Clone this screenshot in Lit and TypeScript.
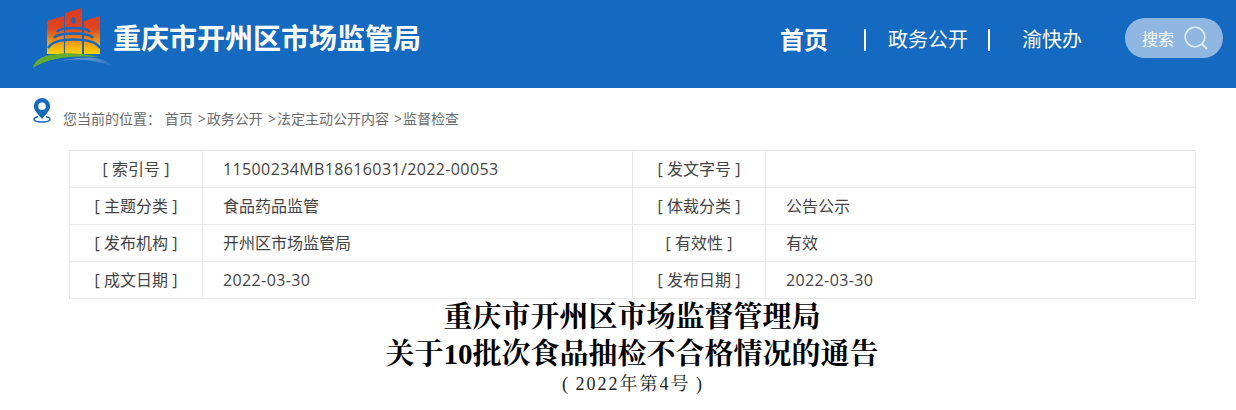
import { LitElement, html, css, svg } from "lit";
import { customElement } from "lit/decorators.js";

const rows = [
  ["[ 索引号 ]", "11500234MB18616031/2022-00053", "[ 发文字号 ]", ""],
  ["[ 主题分类 ]", "食品药品监管", "[ 体裁分类 ]", "公告公示"],
  ["[ 发布机构 ]", "开州区市场监管局", "[ 有效性 ]", "有效"],
  ["[ 成文日期 ]", "2022-03-30", "[ 发布日期 ]", "2022-03-30"],
];

const logo = svg`<svg class="logo" viewBox="0 0 82 62" width="82" height="62">
  <defs>
    <linearGradient id="g" gradientUnits="userSpaceOnUse" x1="0" y1="1" x2="0" y2="47">
      <stop offset="0" stop-color="#dc3a20"/><stop offset=".45" stop-color="#e3451c"/>
      <stop offset=".72" stop-color="#f29310"/><stop offset="1" stop-color="#fed500"/>
    </linearGradient>
    <linearGradient id="sw" x1="0" y1="0" x2="1" y2="0">
      <stop offset="0" stop-color="#1469c1"/><stop offset=".4" stop-color="#6a9bd2"/><stop offset=".75" stop-color="#4f88c8"/><stop offset="1" stop-color="#1a6bc0"/>
    </linearGradient>
  </defs>
  <path fill="url(#g)" d="M14 14 L31 9 V47 H14Z M32 6 L49 1 V47 H32Z M51 14 L67 9 V47 H51Z"/>
  <ellipse cx="40.500" cy="13.500" rx="2.400" ry="3.200" fill="#1469c1"/>
  <path fill="none" stroke="#1469c1" stroke-width="2.500" d="M24 25 Q26 21 40.500 21 Q55 21 57 25 M21 31 Q24 26.500 40.500 26.500 Q57 26.500 60 31 M15 41 Q20 32.500 40.500 32.500 Q62 32.500 67 41"/>
  <path fill="none" stroke="#1469c1" stroke-width="1.200" d="M31.500 30 V47 M50 30 V47"/>
  <path fill="#63ad2f" d="M0 61 C2 51 12 48 28 46.500 Q46 45.500 66 50 C42 48.500 16 50 0 61Z"/>
  <path fill="url(#sw)" d="M15 58 Q46 46 81 60 Q74 52 58 50.500 Q34 50 15 58Z"/>
</svg>`;

const pin = svg`<svg viewBox="0 0 18 25" width="18" height="25">
  <path fill="#1469c1" fill-rule="evenodd" d="M9 0a8.200 8.200 0 0 0-8.200 8.200C.8 12.700 6 17 9 21c3-4 8.200-8.300 8.200-12.800A8.200 8.200 0 0 0 9 0Zm0 4.400a3.800 3.800 0 1 1 0 7.600 3.800 3.800 0 0 1 0-7.600Z"/>
  <path fill="none" stroke="#1469c1" stroke-width="1.500" d="M5 18.500C2.500 19.200 1 20.200 1 21.300 1 23 4.500 24 9 24s8-1 8-2.700c0-1.100-1.500-2.100-4-2.800"/>
</svg>`;

const search = svg`<svg viewBox="0 0 24 24" width="24" height="24">
  <circle cx="11" cy="11" r="9.800" fill="none" stroke="#e4edf7" stroke-width="1.600"/>
  <path d="M18 18l5 5" stroke="#e4edf7" stroke-width="1.800" fill="none"/>
</svg>`;

const isNum = (s: string) => /^[0-9]/.test(s);

@customElement("app-root")
export class AppRoot extends LitElement {
  static styles = css`
    :host {
      display: block;
      height: 410px;
      overflow: hidden;
      background: #fff;
      font-family: "Noto Sans CJK SC", sans-serif;
    }
    .header {
      height: 88px;
      background: #1469c1;
      display: flex;
      align-items: flex-start;
      color: #fff;
    }
    .brand { display: flex; align-items: flex-start; margin-left: 33px; }
    .logo { margin-top: 7px; flex: none; }
    .site {
      margin: 14px 0 0 -2px;
      font-size: 28px;
      line-height: 46px;
      font-weight: 700;
      white-space: nowrap;
    }
    .nav { margin-left: auto; display: flex; align-items: flex-start; margin-right: 13px; }
    .home { font-size: 24px; font-weight: 700; line-height: 36px; margin-top: 21px; }
    .sep { width: 2px; height: 22px; background: #fff; margin-top: 29px; }
    .sep.a { margin-left: 36px; }
    .sep.b { margin-left: 20px; }
    .item { font-size: 20px; line-height: 30px; margin-top: 24px; white-space: nowrap; }
    .item.a { margin-left: 22px; }
    .item.b { margin-left: 32px; width: 60px; overflow: hidden; }
    .search {
      margin: 18px 0 0 43px;
      width: 98px;
      height: 40px;
      border-radius: 20px;
      background: #8fb7e2;
      display: flex;
      align-items: center;
      box-sizing: border-box;
      padding-left: 17px;
      gap: 10px;
      font-size: 16px;
    }
    .crumb {
      display: flex;
      align-items: flex-start;
      height: 62px;
      padding-left: 33px;
      color: #6b6b6b;
      font-family: "Open Sans", "Noto Sans CJK SC", sans-serif;
      font-size: 14px;
      white-space: pre;
    }
    .crumb svg { margin-top: 10px; flex: none; }
    .crumb > span { margin: 21px 0 0 12px; line-height: 20px; }
    .gt { margin: 0 1px 0 1.5px; }
    table {
      margin-left: 69px;
      width: 1127px;
      border-collapse: collapse;
      table-layout: fixed;
      color: #444;
      font-family: "Open Sans", "Noto Sans CJK SC", sans-serif;
      font-size: 16px;
    }
    td {
      height: 36px;
      padding: 0;
      border: 1px solid #e8e8e8;
      line-height: 36px;
    }
    td.k { text-align: center; width: 132px; }
    td.v { padding-left: 20px; }
    td.v1 { width: 409px; }
    td.num { letter-spacing: 0.38px; }
    .doc {
      text-align: center;
      color: #000;
      font-family: "Liberation Serif", "Noto Serif CJK SC", "Noto Sans CJK SC", serif;
      padding-left: 28px;
    }
    .doc h1 { margin: 0; font-size: 29px; line-height: 37px; font-weight: 700; }
    .doc p {
      margin: -1px 0 0;
      padding-left: 2px;
      font-size: 18px;
      line-height: 25px;
      letter-spacing: 2px;
      word-spacing: -1px;
      color: #222;
      white-space: pre;
    }
  `;

  render() {
    return html`
      <div class="header">
        <div class="brand">${logo}<div class="site">重庆市开州区市场监管局</div></div>
        <div class="nav">
          <div class="home">首页</div>
          <div class="sep a"></div>
          <div class="item a">政务公开</div>
          <div class="sep b"></div>
          <div class="item b">渝快办</div>
          <div class="search">搜索 ${search}</div>
        </div>
      </div>
      <div class="crumb">${pin}<span>您当前的位置： 首页 <span class="gt">&gt;</span>政务公开 <span class="gt">&gt;</span>法定主动公开内容 <span class="gt">&gt;</span>监督检查</span></div>
      <table>
        ${rows.map(
          (r) => html`<tr>
            <td class="k">${r[0]}</td>
            <td class="v v1 ${isNum(r[1]) ? "num" : ""}">${r[1]}</td>
            <td class="k">${r[2]}</td>
            <td class="v ${isNum(r[3]) ? "num" : ""}">${r[3]}</td>
          </tr>`
        )}
      </table>
      <div class="doc">
        <h1>重庆市开州区市场监督管理局<br />关于10批次食品抽检不合格情况的通告</h1>
        <p>( 2022年第4号 )</p>
      </div>
    `;
  }
}
